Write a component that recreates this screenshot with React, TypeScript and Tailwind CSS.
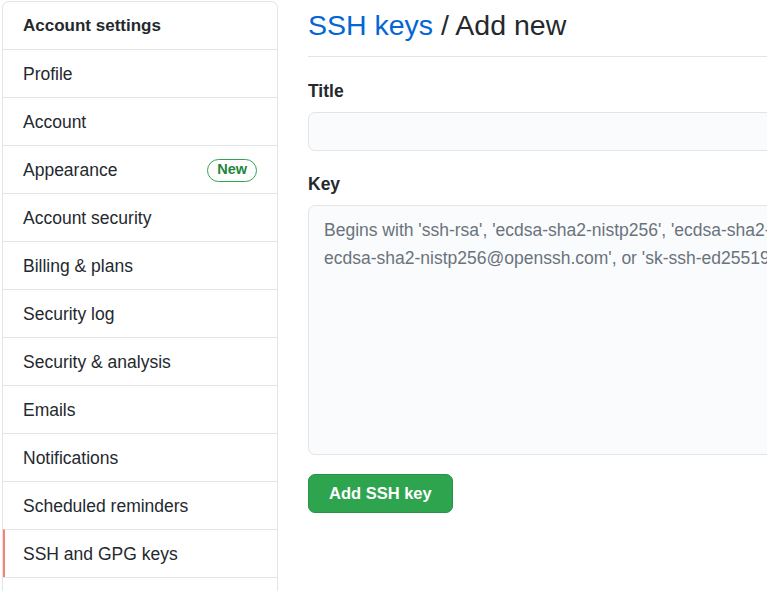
import React from 'react';

const menuItems = [
  { label: 'Profile' },
  { label: 'Account' },
  { label: 'Appearance', badge: 'New' },
  { label: 'Account security' },
  { label: 'Billing & plans' },
  { label: 'Security log' },
  { label: 'Security & analysis' },
  { label: 'Emails' },
  { label: 'Notifications' },
  { label: 'Scheduled reminders' },
  { label: 'SSH and GPG keys', selected: true },
];

const keyPlaceholder =
  "Begins with 'ssh-rsa', 'ecdsa-sha2-nistp256', 'ecdsa-sha2-nistp384', 'ecdsa-sha2-nistp521', 'ssh-ed25519', 'sk-\n" +
  "ecdsa-sha2-nistp256@openssh.com', or 'sk-ssh-ed25519@openssh.com'";

export default function App() {
  return (
    <div
      className="w-[767px] h-[591px] overflow-hidden bg-white text-[#24292e] flex items-start pl-[2px] pt-[1px] gap-[30px]"
      style={{ fontFamily: '"Liberation Sans", Arial, sans-serif' }}
    >
      {/* Settings menu */}
      <nav className="w-[276px] shrink-0 border border-[#e1e4e8] rounded-[7px] overflow-hidden">
        <div className="h-[47px] flex items-center px-5 pt-[1px] text-[17px] font-bold">Account settings</div>
        {menuItems.map((item) => (
          <div
            key={item.label}
            className={
              item.selected
                ? 'h-[48px] border-t border-[#e1e4e8] flex items-center pt-[1px] pr-5 text-[17.5px] border-l-[2px] border-l-[#f9826c] pl-[18px]'
                : 'h-[48px] border-t border-[#e1e4e8] flex items-center pt-[1px] px-5 text-[17.5px]'
            }
          >
            <span className="flex-1">{item.label}</span>
            {item.badge && (
              <span className="h-[23px] px-[9px] flex items-center rounded-full border border-[#2ea44f] text-[#22863a] text-[14.5px] font-bold">
                {item.badge}
              </span>
            )}
          </div>
        ))}
        {/* rest of the menu runs below the fold */}
        <div className="h-[48px] border-t border-[#e1e4e8]" />
      </nav>

      {/* Main form */}
      <main className="w-[900px] shrink-0">
        <div className="h-[56px] border-b border-[#e1e4e8] flex items-center pb-[6px]">
          <h2 className="text-[28.5px] leading-none">
            <a className="text-[#0366d6]">SSH keys</a> / Add new
          </h2>
        </div>

        <form onSubmit={(e) => e.preventDefault()}>
          <label className="block mt-[21px] mb-[8px] leading-[26px] text-[17.5px] font-bold">Title</label>
          <input
            type="text"
            className="block w-full h-[39px] bg-[#fafbfc] border border-[#e1e4e8] rounded-[7px] px-4 outline-none"
          />

          <label className="block mt-[20px] mb-[8px] leading-[26px] text-[17.5px] font-bold">Key</label>
          <textarea
            wrap="off"
            placeholder={keyPlaceholder}
            className="block w-full h-[250px] bg-[#fafbfc] border border-[#e1e4e8] rounded-[7px] px-[15px] pt-[10px] text-[17.5px] leading-[28px] resize-none overflow-hidden outline-none placeholder:text-[#6a737d]"
          />

          <button
            type="submit"
            className="mt-[19px] h-[39px] px-5 rounded-[7px] bg-[#2ea44f] border border-[#27924a] text-white text-[16.5px] font-bold"
          >
            Add SSH key
          </button>
        </form>
      </main>
    </div>
  );
}
